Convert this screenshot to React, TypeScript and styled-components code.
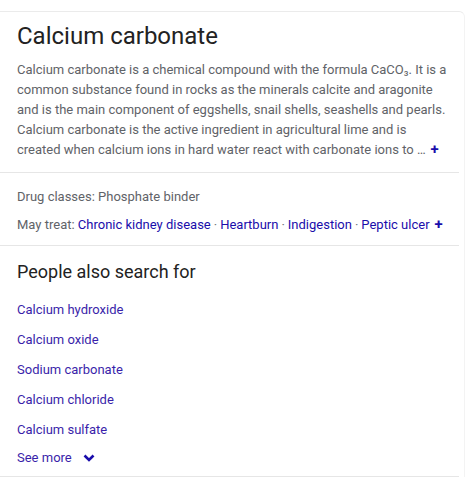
import styled, { createGlobalStyle } from 'styled-components';

const GlobalStyle = createGlobalStyle`
  html, body {
    margin: 0;
    padding: 0;
    background: #fff;
  }
  body {
    font-family: Roboto, "Liberation Sans", Arial, sans-serif;
  }
`;

const Page = styled.div`
  width: 467px;
  height: 491px;
  padding-top: 11px;
  box-sizing: border-box;
  overflow: hidden;
`;

const Card = styled.div`
  width: 465px;
  border-top: 1px solid #ebebeb;
  border-right: 1px solid #f3f3f3;
  border-top-right-radius: 6px;
  box-sizing: border-box;
`;

const Section = styled.div<{ $pad?: string }>`
  padding: ${({ $pad }) => $pad || '0 17px'};
  border-bottom: 1px solid #e6e6e6;
  margin-right: 5px;
`;

const Title = styled.h2`
  margin: 0;
  font-size: 24px;
  font-weight: 400;
  color: #222;
  line-height: 30px;
`;

const Description = styled.p`
  margin: 9px 0 0;
  font-size: 13px;
  line-height: 20px;
  color: #5f6368;
`;

const Plus = styled.span`
  display: inline-block;
  margin-left: 5px;
  color: #1a0dab;
  font-weight: 700;
  font-size: 15px;
  line-height: 12px;
  vertical-align: 0;
`;

const Fact = styled.div`
  font-size: 13px;
  line-height: 20px;
  color: #5f6368;
  white-space: nowrap;
  & + & {
    margin-top: 8px;
  }
`;

const Link = styled.a`
  color: #1a0dab;
  text-decoration: none;
`;

const Dot = styled.span`
  color: #70757a;
  padding: 0 3px;
`;

const Heading = styled.h3`
  margin: 0;
  font-size: 18px;
  font-weight: 400;
  color: #222;
  line-height: 24px;
`;

const LinkList = styled.div`
  display: flex;
  flex-direction: column;
  gap: 10px;
  margin-top: 16px;
`;

const ListLink = styled(Link)`
  font-size: 13px;
  line-height: 20px;
  color: #3a1faa;
`;

const SeeMore = styled.div`
  display: flex;
  align-items: center;
  gap: 11px;
  margin-top: 8px;
  font-size: 13px;
  line-height: 20px;
  color: #3a1faa;
`;

const related = [
  'Calcium hydroxide',
  'Calcium oxide',
  'Sodium carbonate',
  'Calcium chloride',
  'Calcium sulfate',
];

const treats = ['Chronic kidney disease', 'Heartburn', 'Indigestion', 'Peptic ulcer'];

export default function App() {
  return (
    <>
      <GlobalStyle />
      <Page>
        <Card>
          <Section $pad="9px 10px 12px 17px">
            <Title>Calcium carbonate</Title>
            <Description>
              Calcium carbonate is a chemical compound with the formula CaCO₃. It is a common
              substance found in rocks as the minerals calcite and aragonite and is the main
              component of eggshells, snail shells, seashells and pearls. Calcium carbonate is the
              active ingredient in agricultural lime and is created when calcium ions in hard water
              react with carbonate ions to …
              <Plus>+</Plus>
            </Description>
          </Section>
          <Section $pad="14px 6px 10px 17px">
            <Fact>Drug classes: Phosphate binder</Fact>
            <Fact>
              May treat:{' '}
              {treats.map((t, i) => (
                <span key={t}>
                  {i > 0 && <Dot>·</Dot>}
                  <Link href="#">{t}</Link>
                </span>
              ))}
              <Plus>+</Plus>
            </Fact>
          </Section>
          <Section $pad="14px 17px 8px">
            <Heading>People also search for</Heading>
            <LinkList>
              {related.map((r) => (
                <ListLink key={r} href="#">
                  {r}
                </ListLink>
              ))}
            </LinkList>
            <SeeMore>
              See more
              <svg width="12" height="8" viewBox="0 0 12 8">
                <path d="M1.5 1.5 L6 6 L10.5 1.5" stroke="#1a0dab" strokeWidth="2.6" fill="none" />
              </svg>
            </SeeMore>
          </Section>
        </Card>
      </Page>
    </>
  );
}
